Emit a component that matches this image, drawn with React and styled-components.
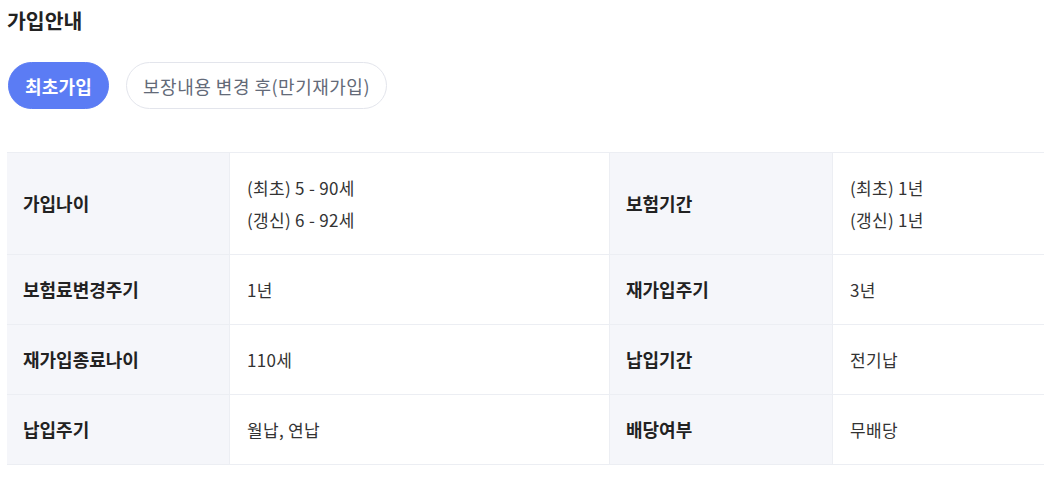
import React from "react";
import styled, { createGlobalStyle } from "styled-components";

const GlobalStyle = createGlobalStyle`
  html, body {
    margin: 0;
    padding: 0;
    background: #fff;
    overflow: hidden;
  }
  body {
    font-family: "Noto Sans CJK KR", "Noto Sans", sans-serif;
  }
`;

const Page = styled.div`
  padding: 6px 0 0 7px;
  width: 1100px;
`;

const Title = styled.h2`
  margin: 0;
  font-size: 20.5px;
  line-height: 28px;
  font-weight: 700;
  color: #222;
  letter-spacing: 0;
`;

const Tabs = styled.div`
  display: flex;
  gap: 17px;
  margin: 28px 0 0 1px;
`;

const Tab = styled.button`
  height: 47px;
  padding: 0 16px;
  border-radius: 24px;
  border: 1px solid ${(p) => (p.$active ? "#5b7cf4" : "#e3e5ec")};
  background: ${(p) => (p.$active ? "#5b7cf4" : "#fff")};
  color: ${(p) => (p.$active ? "#fff" : "#636a78")};
  font-family: inherit;
  font-size: 18px;
  font-weight: ${(p) => (p.$active ? 700 : 400)};
  letter-spacing: ${(p) => (p.$active ? "0.2px" : "0.5px")};
  cursor: pointer;
`;

const Table = styled.div`
  margin-top: 43px;
  display: grid;
  grid-template-columns: 222px 380px 223px 1fr;
  border-top: 1px solid #eceef3;
`;

const Cell = styled.div`
  display: flex;
  flex-direction: column;
  justify-content: center;
  gap: 6.5px;
  padding: 22px 17px 22px ${(p) => (p.$head ? "16px" : "17px")};
  border-bottom: 1px solid #eceef3;
  border-left: ${(p) => (p.$first ? "none" : "1px solid #eceef3")};
  background: ${(p) => (p.$head ? "#f5f6fa" : "#fff")};
  color: ${(p) => (p.$head ? "#222" : "#333")};
  font-size: ${(p) => (p.$head ? "18px" : "17px")};
  font-weight: ${(p) => (p.$head ? 700 : 400)};
  letter-spacing: ${(p) => (p.$head ? "0" : "0.3px")};
`;

const Line = styled.div`
  line-height: 25px;
`;

const rows = [
  ["가입나이", ["(최초) 5 - 90세", "(갱신) 6 - 92세"], "보험기간", ["(최초) 1년", "(갱신) 1년"]],
  ["보험료변경주기", ["1년"], "재가입주기", ["3년"]],
  ["재가입종료나이", ["110세"], "납입기간", ["전기납"]],
  ["납입주기", ["월납, 연납"], "배당여부", ["무배당"]],
];

const App = () => {
  return (
    <Page>
      <GlobalStyle />
      <Title>가입안내</Title>
      <Tabs>
        <Tab $active>최초가입</Tab>
        <Tab>보장내용 변경 후(만기재가입)</Tab>
      </Tabs>
      <Table>
        {rows.map((row) => (
          <React.Fragment key={row[0]}>
            <Cell $head $first>
              <Line>{row[0]}</Line>
            </Cell>
            <Cell>
              {row[1].map((t) => (
                <Line key={t}>{t}</Line>
              ))}
            </Cell>
            <Cell $head>
              <Line>{row[2]}</Line>
            </Cell>
            <Cell>
              {row[3].map((t) => (
                <Line key={t}>{t}</Line>
              ))}
            </Cell>
          </React.Fragment>
        ))}
      </Table>
    </Page>
  );
};

export default App;
